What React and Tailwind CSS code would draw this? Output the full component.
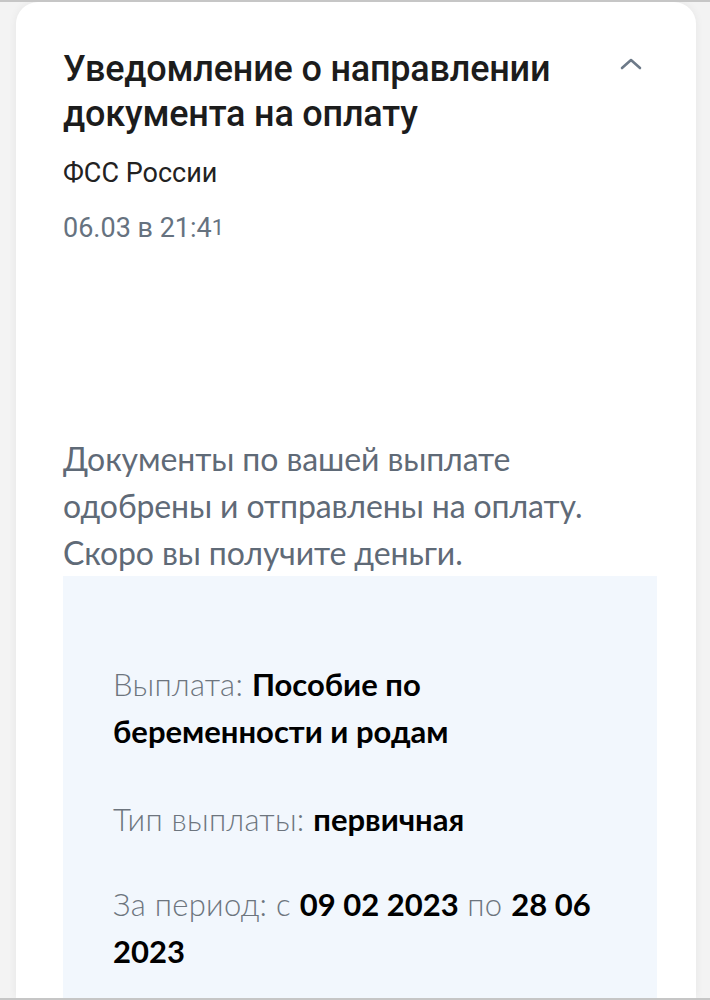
import React from "react";

export default function App() {
  return (
    <div className="w-[710px] h-[1000px] overflow-hidden flex flex-col bg-[#f3f3f3] border-t-2 border-b-2 border-[#c6c6c6]">
      <div className="flex-1 overflow-hidden ml-[16px] mr-[14px] bg-white rounded-t-[22px] shadow-[0_0_8px_rgba(0,0,0,0.06)] pl-[47px] pr-[39px] pt-[45px]">
        <div className="flex justify-between items-start pr-[15px]">
          <h2 className="font-['Roboto',sans-serif] font-medium text-[36px] leading-[45px] text-[#1c1c1c] tracking-[-0.2px]">
            Уведомление о направлении
            <br />
            документа на оплату
          </h2>
          <svg width="22" height="14" viewBox="0 0 22 14" className="mt-[10px] shrink-0" fill="none">
            <path d="M2 11 L11 3 L20 11" stroke="#6d7a89" strokeWidth="2.6" strokeLinecap="round" strokeLinejoin="round" />
          </svg>
        </div>
        <div className="mt-[20px] font-['Roboto',sans-serif] text-[27px] leading-[32px] text-[#222]">
          ФСС России
        </div>
        <div className="mt-[23px] font-['Roboto',sans-serif] text-[27px] leading-[32px] text-[#66727f]">
          06.03 в 21:4<span className="text-[22px] relative -top-[2px]">1</span>
        </div>
        <p className="mt-[189px] font-['Lato',sans-serif] text-[32px] leading-[47px] text-[#5f6a77] tracking-[-0.1px]">
          Документы по вашей выплате
          <br />
          одобрены и отправлены на оплату.
          <br />
          Скоро вы получите деньги.
        </p>
        <div className="bg-[#f2f7fd] pl-[50px] pr-[36px] pt-[85px] pb-[40px] font-['Lato',sans-serif] text-[31px] leading-[47px]">
          <p className="text-[#6d757e] font-light tracking-[0.3px]">
            Выплата: <span className="font-bold text-black tracking-normal">Пособие по беременности и родам</span>
          </p>
          <p className="mt-[41px] text-[#6d757e] font-light tracking-[0.3px]">
            Тип выплаты: <span className="font-bold text-black tracking-normal">первичная</span>
          </p>
          <p className="mt-[38px] text-[#6d757e] font-light tracking-[0.3px]">
            За период: с <span className="font-bold text-black tracking-normal">09 02 2023</span> по{" "}
            <span className="font-bold text-black tracking-normal">28 06 2023</span>
          </p>
        </div>
      </div>
    </div>
  );
}
